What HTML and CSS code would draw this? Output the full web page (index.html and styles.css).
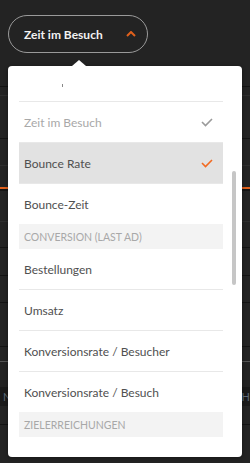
FILE: index.html
```html
<!DOCTYPE html>
<html lang="de">
<head>
    <meta charset="UTF-8">
    <meta name="viewport" content="width=device-width, initial-scale=1.0">
    <title>Metrik wählen</title>
    <link rel="stylesheet" href="styles.css">
</head>
<body>

<div class="page">
    <div class="toolbar">
        <button class="metric-btn">
            <span>Zeit im Besuch</span>
            <svg class="chevron" width="10" height="6" viewBox="0 0 10 6">
                <polyline points="1,5 5,1 9,5" fill="none" stroke="#e0601c" stroke-width="2"/>
            </svg>
        </button>
    </div>

    <!-- Tabelle im Hintergrund -->
    <div class="bg-table">
        <div class="bg-row h26 dark"></div>
        <div class="bg-row h8 faint"></div>
        <div class="bg-row h42 dark"></div>
        <div class="bg-row h26 faint"></div>
        <div class="bg-row h21 orange"></div>
        <div class="bg-row h30 faint"></div>
        <div class="bg-row h25 dark"></div>
        <div class="bg-row h27 dark"></div>
        <div class="bg-row h26 dark"></div>
        <div class="bg-row h43 dark"></div>
        <div class="bg-row h14 gray"></div>
        <div class="bg-row h25"></div>
        <div class="bg-row band"><span>N</span><span>H</span></div>
        <div class="bg-row h18 dark"></div>
    </div>

    <div class="dropdown">
        <ul class="menu">
            <li class="item first"><span class="mark"></span></li>
            <li class="item muted">Zeit im Besuch
                <svg width="12" height="9" viewBox="0 0 12 9"><polyline points="1,4 4.5,7.5 11,1" fill="none" stroke="#9a9a9a" stroke-width="1.6"/></svg>
            </li>
            <li class="item active">Bounce Rate
                <svg width="12" height="9" viewBox="0 0 12 9"><polyline points="1,4 4.5,7.5 11,1" fill="none" stroke="#f26a21" stroke-width="1.6"/></svg>
            </li>
            <li class="item last">Bounce-Zeit</li>
            <li class="group">Conversion (Last AD)</li>
            <li class="item">Bestellungen</li>
            <li class="item">Umsatz</li>
            <li class="item">Konversionsrate / Besucher</li>
            <li class="item last">Konversionsrate / Besuch</li>
            <li class="group">Zielerreichungen</li>
        </ul>
        <div class="scrollbar"></div>
    </div>
</div>

</body>
</html>
```

FILE: styles.css
```css
body {
    margin: 0;
    background: #232323;
    font-family: 'Lato', 'Open Sans', sans-serif;
}
.page {
    position: relative;
    width: 250px;
    height: 463px;
    overflow: hidden;
}
.toolbar {
    padding: 15px 8px 7px;
}
.metric-btn {
    display: flex;
    align-items: center;
    gap: 23px;
    box-sizing: border-box;
    width: 140px;
    height: 38px;
    padding: 0 0 0 15px;
    background: transparent;
    border: 1px solid #9a9a9a;
    border-radius: 19px;
    color: #f2f2f2;
    font-family: inherit;
    font-size: 12px;
    font-weight: bold;
}
.chevron {
    margin-top: -1px;
}

/* Hintergrund */
.bg-row.dark { border-bottom: 1px solid #131313; }
.bg-row.faint { border-bottom: 1px solid #2e2e2e; }
.bg-row.gray { border-bottom: 1px solid #555; }
.bg-row.orange { border-bottom: 2px solid #e0601c; margin-bottom: 2px; box-shadow: 0 2px 0 #141414; }
.h8 { height: 8px; }
.h14 { height: 14px; }
.h18 { height: 18px; }
.h21 { height: 21px; }
.h25 { height: 25px; }
.h26 { height: 26px; }
.h27 { height: 27px; }
.h30 { height: 30px; }
.h42 { height: 42px; }
.h43 { height: 43px; }
.bg-row.band {
    display: flex;
    justify-content: space-between;
    height: 19px;
    padding: 0 0 0 3px;
    background: #1a1a1a;
    color: #5e6a78;
    font-size: 11px;
    line-height: 19px;
}

/* Dropdown */
.dropdown {
    position: absolute;
    left: 8px;
    top: 66px;
    width: 234px;
    height: 391px;
    background: #fff;
    border-radius: 4px;
    box-shadow: 0 1px 4px rgba(0,0,0,0.4);
}
.dropdown::before {
    content: "";
    position: absolute;
    left: 64px;
    top: -6px;
    border-left: 7px solid transparent;
    border-right: 7px solid transparent;
    border-bottom: 6px solid #fff;
}
.menu {
    list-style: none;
    margin: 0;
    padding: 0 19px 0 11px;
}
.item {
    display: flex;
    align-items: center;
    justify-content: space-between;
    height: 40px;
    padding: 0 10px 0 5px;
    border-bottom: 1px solid #e8e8e8;
    color: #505050;
    font-size: 12px;
}
.item.first {
    height: 35px;
}
.item.last {
    border-bottom: none;
}
.mark {
    display: block;
    width: 1px;
    height: 3px;
    margin: 3px 0 0 38px;
    background: #888;
}
.item.muted {
    color: #a8a8a8;
}
.item.active {
    background: #e2e2e2;
}
.group {
    height: 25px;
    padding: 0 5px;
    background: #f3f3f3;
    color: #a8a8a8;
    font-size: 10.5px;
    line-height: 26px;
    text-transform: uppercase;
}
.scrollbar {
    position: absolute;
    left: 224px;
    top: 105px;
    width: 4px;
    height: 114px;
    border-radius: 2px;
    background: #c6c6c6;
}
```
